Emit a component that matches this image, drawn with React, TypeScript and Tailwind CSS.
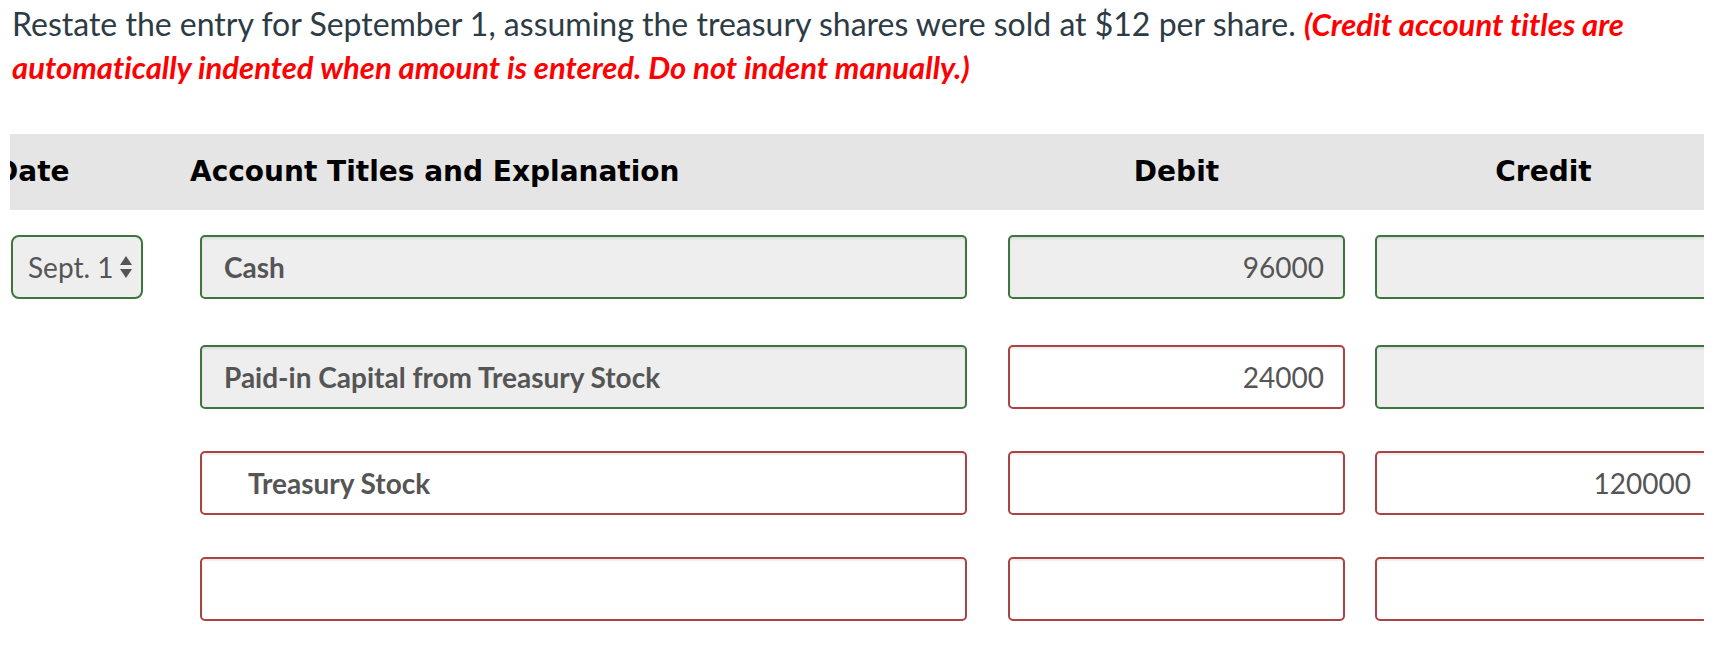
import React from "react";

type Tone = "ok" | "bad";

const rows: {
  title: string;
  indent?: boolean;
  titleTone: Tone;
  debit: string;
  debitTone: Tone;
  credit: string;
  creditTone: Tone;
}[] = [
  { title: "Cash", titleTone: "ok", debit: "96000", debitTone: "ok", credit: "", creditTone: "ok" },
  { title: "Paid-in Capital from Treasury Stock", titleTone: "ok", debit: "24000", debitTone: "bad", credit: "", creditTone: "ok" },
  { title: "Treasury Stock", indent: true, titleTone: "bad", debit: "", debitTone: "bad", credit: "120000", creditTone: "bad" },
  { title: "", titleTone: "bad", debit: "", debitTone: "bad", credit: "", creditTone: "bad" },
];

function box(tone: Tone) {
  return tone === "ok"
    ? "border-[#3c763d] bg-[#eeeeee]"
    : "border-[#a94442] bg-white";
}

function Field({
  tone,
  value,
  className,
  align = "left",
  bold = false,
}: {
  tone: Tone;
  value: string;
  className: string;
  align?: "left" | "right";
  bold?: boolean;
}) {
  return (
    <div
      className={`flex h-[64px] shrink-0 items-center rounded-[5px] border-2 shadow-[inset_0_2px_2px_rgba(0,0,0,0.075)] text-[28px] text-[#555555] ${box(tone)} ${
        align === "right" ? "justify-end pr-[19px]" : ""
      } ${bold ? "font-bold" : ""} ${className}`}
    >
      {value}
    </div>
  );
}

function DateSelect() {
  return (
    <div className="ml-px flex h-[64px] w-[132px] shrink-0 items-center justify-between rounded-[8px] border-2 border-[#3c763d] bg-[#eeeeee] pl-[15px] pr-[8px] text-[28px] text-[#555555]">
      <span>Sept. 1</span>
      <svg width="14" height="24" viewBox="0 0 14 24" className="fill-[#555555]">
        <path d="M7 1 L13 10 L1 10 Z" />
        <path d="M7 23 L13 14 L1 14 Z" />
      </svg>
    </div>
  );
}

export default function App() {
  return (
    <div className="min-h-screen w-full bg-white font-['Lato',sans-serif] [font-variant-ligatures:none]">
      <p className="pl-[12px] pt-[2px] pr-[12px] text-[32px] leading-[43px] text-[#2d3b45]">
        Restate the entry for September 1, assuming the treasury shares were sold at $12 per share.{" "}
        <span className="text-[31px] leading-none font-bold italic text-[#ff0000]">
          (Credit account titles are automatically indented when amount is entered. Do not indent manually.)
        </span>
      </p>

      <div className="ml-[10px] mt-[46px] w-[1694px] overflow-hidden">
        {/* header */}
        <div className="flex h-[76px] w-[1702px] items-center bg-[#e5e5e5] font-['DejaVu_Sans',sans-serif] text-[28px] font-bold text-black">
          <div className="w-[190px] shrink-0">
            <span className="-ml-[15px]">Date</span>
          </div>
          <div className="w-[808px] shrink-0">
            <span className="-ml-[10px]">Account Titles and Explanation</span>
          </div>
          <div className="w-[367px] shrink-0 pr-[30px] text-center">Debit</div>
          <div className="w-[337px] shrink-0 text-center">Credit</div>
        </div>

        {/* rows */}
        <div className="flex flex-col pt-[25px]">
          {rows.map((r, i) => (
            <div
              key={i}
              className={`flex w-[1702px] ${i === 0 ? "" : i === 1 ? "mt-[46px]" : "mt-[42px]"}`}
            >
              <div className="w-[190px] shrink-0">{i === 0 && <DateSelect />}</div>
              <Field
                tone={r.titleTone}
                value={r.title}
                bold
                className={`w-[767px] ${r.indent ? "pl-[46px]" : "pl-[22px]"}`}
              />
              <Field tone={r.debitTone} value={r.debit} align="right" className="ml-[41px] w-[337px]" />
              <Field tone={r.creditTone} value={r.credit} align="right" className="ml-[30px] w-[337px]" />
            </div>
          ))}
        </div>
      </div>
    </div>
  );
}
